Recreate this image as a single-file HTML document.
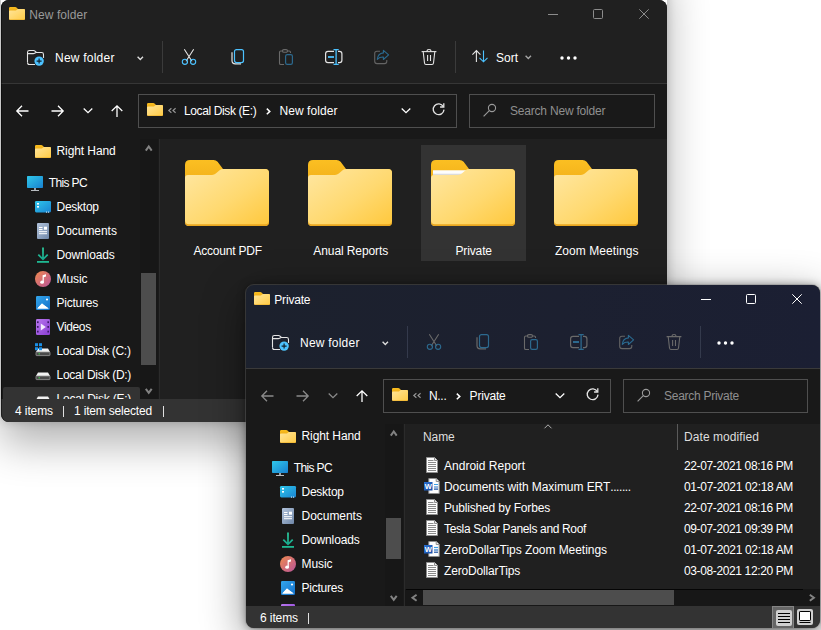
<!DOCTYPE html><html><head><meta charset="utf-8"><title>File Explorer</title><style>
html,body{margin:0;padding:0}
body{width:821px;height:630px;overflow:hidden;background:#fff;position:relative;font-family:"Liberation Sans",sans-serif;font-size:12px;color:#fff}
.win{position:absolute;box-sizing:border-box;border-radius:8px;overflow:hidden;background:#191919}
.frame{position:absolute;box-sizing:border-box;border-radius:8px;border:1px solid #484848;pointer-events:none}
.b{position:absolute;box-sizing:border-box}
.t{position:absolute;white-space:pre;line-height:16px;height:16px}
svg{display:block;overflow:visible}
</style></head><body><div class="b" style="left:1px;top:-40px;width:666px;height:462px;border-radius:8px;box-shadow:0 22px 42px rgba(0,0,0,.3), 0 0 10px rgba(0,0,0,.18)"></div><div class="win" style="left:1px;top:0px;width:666px;height:422px;box-shadow:none"><div class="b" style="left:0;top:-1px;width:666px;height:423px"><div class="b" style="left:0px;top:0px;width:666px;height:84px;background:#202020;"></div><div class="b" style="left:0px;top:84px;width:666px;height:1px;background:#363636;"></div><div class="b" style="left:8px;top:8px"><svg width="16" height="13" viewBox="0 0 16 13"><defs><linearGradient id="g1" x1="0" y1="0" x2="1" y2="1"><stop offset="0" stop-color="#ffe59a"/><stop offset="1" stop-color="#ffcb45"/></linearGradient><linearGradient id="g2" x1="0" y1="0" x2="0" y2="1"><stop offset="0" stop-color="#f9bd1e"/><stop offset="1" stop-color="#eaa716"/></linearGradient></defs><path d="M0 1.2Q0 0 1.2 0H6.3Q7 0 7.5 .5L9 2H14.8Q16 2 16 3.2V6H0Z" fill="url(#g2)"/><path d="M0 4.6Q0 3.6 1 3.6H6.2Q6.8 3.6 7.3 3.2L8.3 2.3Q8.8 2 9.4 2H14.8Q16 2 16 3.2V11.8Q16 13 14.8 13H1.2Q0 13 0 11.8Z" fill="url(#g1)"/><path d="M0 11.6V11.8Q0 13 1.2 13H14.8Q16 13 16 11.8V11.6Q16 12.5 14.8 12.5H1.2Q0 12.5 0 11.6Z" fill="#e9a920"/></svg></div><span class="t " style="left:28.30px;top:7.84px;font-size:12px;letter-spacing:0.064px;color:#9a9a9a;">New folder</span><div class="b" style="left:547px;top:15px;width:10px;height:1px;background:#8c8c8c;"></div><div class="b" style="left:592px;top:10px;width:10px;height:10px;border:1px solid #8c8c8c;border-radius:1.5px"></div><div class="b" style="left:638px;top:10px"><svg width="10" height="10" viewBox="0 0 10 10"><path d="M.3 .3L9.7 9.7M9.7 .3L.3 9.7" stroke="#8c8c8c" stroke-width="1" fill="none"/></svg></div><div class="b" style="left:26px;top:51px"><svg width="18" height="17" viewBox="0 0 18 17"><path d="M.5 12.5V2.4Q.5 .5 2.4 .5H6.6Q7.4 .5 8 1.1L9.4 2.5H14.6Q16.5 2.5 16.5 4.4V8" stroke="#e4e4e4" stroke-width="1.1" fill="none"/><path d="M.5 12.5Q.5 14.5 2.4 14.5H8" stroke="#e4e4e4" stroke-width="1.1" fill="none"/><path d="M.5 3.6H6.3Q7 3.6 7.6 3.2L9 2.5" stroke="#e4e4e4" stroke-width="1.1" fill="none"/><circle cx="12.1" cy="11.1" r="5.1" fill="#202020"/><circle cx="12.1" cy="11.1" r="4.7" fill="#4cc2ff"/><path d="M12.1 8.6V13.6M9.6 11.1H14.6" stroke="#10202c" stroke-width="1.2" fill="none"/></svg></div><span class="t " style="left:54.00px;top:50.84px;font-size:12px;letter-spacing:0.224px;">New folder</span><div class="b" style="left:135.7px;top:56.8px"><svg width="6.6" height="4.4" viewBox="0 0 6.6 4.4"><path d="M.6 .7L3.3 3.4L6 .7" stroke="#dcdcdc" stroke-width="1.4" fill="none"/></svg></div><div class="b" style="left:161px;top:42px;width:1px;height:32px;background:#3b3b3b;"></div><div class="b" style="left:180px;top:50px"><svg width="16" height="16" viewBox="0 0 16 16"><path d="M3.3 .3L11 12.2M12.7 .3L5 12.2" stroke="#e4e4e4" stroke-width="1.1" fill="none"/><circle cx="3.9" cy="12.8" r="2.6" stroke="#4cc2ff" stroke-width="1.1" fill="none"/><circle cx="12.1" cy="12.8" r="2.6" stroke="#4cc2ff" stroke-width="1.1" fill="none"/></svg></div><div class="b" style="left:229.5px;top:50px"><svg width="14" height="16" viewBox="0 0 14 16"><path d="M1 3.3V11.5Q1 14.8 4.3 14.8H10" stroke="#e4e4e4" stroke-width="1.2" fill="none"/><rect x="3.5" y=".6" width="9" height="13" rx="2" stroke="#4cc2ff" stroke-width="1.2" fill="none"/></svg></div><div class="b" style="left:276.5px;top:50px"><svg width="16" height="17" viewBox="0 0 16 17"><path d="M6 15.5H2.8Q1.5 15.5 1.5 14.2V3.3Q1.5 2 2.8 2H4.5M9.5 2H11.2Q12.5 2 12.5 3.3V4" stroke="#6a6a6a" stroke-width="1.1" fill="none"/><rect x="4.5" y=".6" width="5" height="2.6" rx="1.3" stroke="#6a6a6a" stroke-width="1.1" fill="none"/><rect x="7.6" y="5.6" width="6.8" height="9.8" rx="1.6" stroke="#2c698e" stroke-width="1.2" fill="none"/></svg></div><div class="b" style="left:324px;top:50px"><svg width="18" height="16" viewBox="0 0 18 16"><path d="M9 2.3H3Q.6 2.3 .6 4.7V11.3Q.6 13.7 3 13.7H9M13 2.3H14.5Q16.9 2.3 16.9 4.7V11.3Q16.9 13.7 14.5 13.7H13" stroke="#e4e4e4" stroke-width="1.2" fill="none"/><path d="M11.1 .6V15.4M8.5 .6H13.7M8.5 15.4H13.7" stroke="#4cc2ff" stroke-width="1.3" fill="none"/><path d="M3 8H9" stroke="#4cc2ff" stroke-width="1.8" fill="none"/></svg></div><div class="b" style="left:373px;top:50px"><svg width="16" height="16" viewBox="0 0 16 16"><path d="M6 2.2H3Q.7 2.2 .7 4.5V12.3Q.7 14.6 3 14.6H10.5Q12.8 14.6 12.8 12.3V11" stroke="#646464" stroke-width="1.1" fill="none"/><path d="M9.4 1.3L14.6 5.9L9.4 10.5V8Q5.6 7.8 3.3 10.3Q3.8 4.6 9.4 3.9Z" stroke="#2a6a90" stroke-width="1.1" fill="none" stroke-linejoin="round"/></svg></div><div class="b" style="left:420px;top:50px"><svg width="16" height="16" viewBox="0 0 16 16"><path d="M.6 2.6H15.4" stroke="#e4e4e4" stroke-width="1.1" fill="none"/><path d="M6 2.4Q6 .5 8 .5Q10 .5 10 2.4" stroke="#e4e4e4" stroke-width="1.1" fill="none"/><path d="M2.2 2.8L3.5 14Q3.7 15.5 5 15.5H11Q12.3 15.5 12.5 14L13.8 2.8" stroke="#e4e4e4" stroke-width="1.1" fill="none"/><path d="M6.6 6V12M9.5 6V12" stroke="#e4e4e4" stroke-width="1.1" fill="none"/></svg></div><div class="b" style="left:454px;top:42px;width:1px;height:32px;background:#3b3b3b;"></div><div class="b" style="left:471px;top:51px"><svg width="16" height="13" viewBox="0 0 16 13"><path d="M4.4 .6V12M.4 4.6L4.4 .6L8.4 4.6" stroke="#e4e4e4" stroke-width="1.1" fill="none"/><path d="M11.5 .4V11.8M7.5 7.8L11.5 11.8L15.5 7.8" stroke="#4cc2ff" stroke-width="1.1" fill="none"/></svg></div><span class="t " style="left:495.00px;top:50.84px;font-size:12px;letter-spacing:-0.004px;">Sort</span><div class="b" style="left:523.7px;top:55.8px"><svg width="6.6" height="4.4" viewBox="0 0 6.6 4.4"><path d="M.6 .7L3.3 3.4L6 .7" stroke="#a4a4a4" stroke-width="1.4" fill="none"/></svg></div><div class="b" style="left:559px;top:57px"><svg width="17" height="4" viewBox="0 0 17 4"><circle cx="2" cy="2" r="1.7" fill="#fff"/><circle cx="8.5" cy="2" r="1.7" fill="#fff"/><circle cx="15" cy="2" r="1.7" fill="#fff"/></svg></div><div class="b" style="left:15px;top:106px"><svg width="13" height="12" viewBox="0 0 13 12"><path d="M12.5 6H1M6 .7L.8 6L6 11.3" stroke="#ffffff" stroke-width="1.3" fill="none"/></svg></div><div class="b" style="left:50px;top:106px"><svg width="13" height="12" viewBox="0 0 13 12"><path d="M.5 6H12M7 .7L12.2 6L7 11.3" stroke="#ffffff" stroke-width="1.3" fill="none"/></svg></div><div class="b" style="left:82px;top:109.3px"><svg width="10" height="6" viewBox="0 0 10 6"><path d="M.7 .5L5 4.6L9.3 .5" stroke="#ffffff" stroke-width="1.3" fill="none"/></svg></div><div class="b" style="left:110px;top:106px"><svg width="12" height="12" viewBox="0 0 12 12"><path d="M6 12V1M.7 6L6 .8L11.3 6" stroke="#ffffff" stroke-width="1.3" fill="none"/></svg></div><div class="b" style="left:137px;top:95px;width:319px;height:34px;border:1px solid #4f4f4f"></div><div class="b" style="left:146px;top:104px"><svg width="16" height="13" viewBox="0 0 16 13"><defs><linearGradient id="g3" x1="0" y1="0" x2="1" y2="1"><stop offset="0" stop-color="#ffe59a"/><stop offset="1" stop-color="#ffcb45"/></linearGradient><linearGradient id="g4" x1="0" y1="0" x2="0" y2="1"><stop offset="0" stop-color="#f9bd1e"/><stop offset="1" stop-color="#eaa716"/></linearGradient></defs><path d="M0 1.2Q0 0 1.2 0H6.3Q7 0 7.5 .5L9 2H14.8Q16 2 16 3.2V6H0Z" fill="url(#g4)"/><path d="M0 4.6Q0 3.6 1 3.6H6.2Q6.8 3.6 7.3 3.2L8.3 2.3Q8.8 2 9.4 2H14.8Q16 2 16 3.2V11.8Q16 13 14.8 13H1.2Q0 13 0 11.8Z" fill="url(#g3)"/><path d="M0 11.6V11.8Q0 13 1.2 13H14.8Q16 13 16 11.8V11.6Q16 12.5 14.8 12.5H1.2Q0 12.5 0 11.6Z" fill="#e9a920"/></svg></div><div class="b" style="left:167px;top:108.8px"><svg width="9" height="5" viewBox="0 0 9 5"><path d="M3.4 .3L.8 2.5L3.4 4.7M7.6 .3L5 2.5L7.6 4.7" stroke="#969696" stroke-width="1.15" fill="none"/></svg></div><span class="t " style="left:183.00px;top:103.84px;font-size:12px;letter-spacing:-0.382px;">Local Disk (E:)</span><div class="b" style="left:265.3px;top:109px"><svg width="4.6" height="6.8" viewBox="0 0 4.6 6.8"><path d="M.8 .6L3.8 3.4L.8 6.2" stroke="#ffffff" stroke-width="1.5" fill="none"/></svg></div><span class="t " style="left:278.50px;top:103.84px;font-size:12px;letter-spacing:0.064px;">New folder</span><div class="b" style="left:400px;top:109.3px"><svg width="10" height="6" viewBox="0 0 10 6"><path d="M.7 .5L5 4.6L9.3 .5" stroke="#ffffff" stroke-width="1.3" fill="none"/></svg></div><div class="b" style="left:431px;top:104px"><svg width="13" height="13" viewBox="0 0 13 13"><path d="M11.3 3.6A5.4 5.4 0 1 0 12 6.6" stroke="#e4e4e4" stroke-width="1.3" fill="none"/><path d="M11.8 .3V4H8.1" stroke="#e4e4e4" stroke-width="1.3" fill="none"/></svg></div><div class="b" style="left:468px;top:95px;width:186px;height:34px;border:1px solid #4f4f4f"></div><div class="b" style="left:482px;top:104px"><svg width="14" height="14" viewBox="0 0 14 14"><circle cx="9" cy="5" r="3.6" stroke="#9a9a9a" stroke-width="1.1" fill="none"/><path d="M6.3 7.7L.6 13.4" stroke="#9a9a9a" stroke-width="1.1" fill="none"/></svg></div><span class="t " style="left:509.00px;top:103.84px;font-size:12px;letter-spacing:-0.201px;color:#8f8f8f;">Search New folder</span><div class="b" style="left:0px;top:140px;width:666px;height:260px;background:#191919;"></div><div class="b" style="left:139px;top:140px;width:18px;height:260px;background:#171717;"></div><div class="b" style="left:157px;top:140px;width:1px;height:260px;background:#1a1a1a;"></div><div class="b" style="left:158px;top:140px;width:1px;height:260px;background:#2b2b2b;"></div><div class="b" style="left:159px;top:140px;width:507px;height:260px;background:#202020;"></div><div class="b" style="left:0px;top:140px;width:140px;height:260px;overflow:hidden"><div class="b" style="left:34px;top:5.5px"><svg width="16" height="13" viewBox="0 0 16 13"><defs><linearGradient id="g5" x1="0" y1="0" x2="1" y2="1"><stop offset="0" stop-color="#ffe59a"/><stop offset="1" stop-color="#ffcb45"/></linearGradient><linearGradient id="g6" x1="0" y1="0" x2="0" y2="1"><stop offset="0" stop-color="#f9bd1e"/><stop offset="1" stop-color="#eaa716"/></linearGradient></defs><path d="M0 1.2Q0 0 1.2 0H6.3Q7 0 7.5 .5L9 2H14.8Q16 2 16 3.2V6H0Z" fill="url(#g6)"/><path d="M0 4.6Q0 3.6 1 3.6H6.2Q6.8 3.6 7.3 3.2L8.3 2.3Q8.8 2 9.4 2H14.8Q16 2 16 3.2V11.8Q16 13 14.8 13H1.2Q0 13 0 11.8Z" fill="url(#g5)"/><path d="M0 11.6V11.8Q0 13 1.2 13H14.8Q16 13 16 11.8V11.6Q16 12.5 14.8 12.5H1.2Q0 12.5 0 11.6Z" fill="#e9a920"/></svg></div><span class="t " style="left:55.50px;top:3.84px;font-size:12px;letter-spacing:-0.085px;">Right Hand</span><div class="b" style="left:26px;top:36px"><svg width="16" height="16" viewBox="0 0 16 16"><defs><linearGradient id="g7" x1="0" y1="0" x2="1" y2="1"><stop offset="0" stop-color="#30c8ea"/><stop offset="1" stop-color="#1880cf"/></linearGradient></defs><rect x="0" y="1" width="16" height="12" rx=".8" fill="url(#g7)"/><rect x="7" y="13" width="2" height="2" fill="#9aa0a6"/><rect x="4" y="15" width="8" height="1" fill="#b8bcc0"/></svg></div><span class="t " style="left:47.70px;top:35.84px;font-size:12px;letter-spacing:-0.627px;">This PC</span><div class="b" style="left:34px;top:60px"><svg width="16" height="16" viewBox="0 0 16 16"><defs><linearGradient id="g8" x1="0" y1="0" x2="1" y2="1"><stop offset="0" stop-color="#2fc6ea"/><stop offset="1" stop-color="#1a84d2"/></linearGradient></defs><rect x="0" y="2" width="16" height="11.4" rx="1.3" fill="url(#g8)"/><rect x="2" y="4" width="2" height="1.6" fill="#fff"/><rect x="2" y="7" width="2" height="1.6" fill="#fff"/><rect x="11" y="12.6" width="1" height="1" fill="#e8f4ff"/><rect x="13" y="12.6" width="1" height="1" fill="#e8f4ff"/></svg></div><span class="t " style="left:55.50px;top:59.84px;font-size:12px;letter-spacing:-0.247px;">Desktop</span><div class="b" style="left:34px;top:84px"><svg width="16" height="16" viewBox="0 0 16 16"><defs><linearGradient id="g9" x1="0" y1="0" x2="1" y2="1"><stop offset="0" stop-color="#b3c4dc"/><stop offset="1" stop-color="#6f87a8"/></linearGradient></defs><rect x="2" y="0" width="12" height="16" rx="1" fill="url(#g9)"/><path d="M4 4.5H7.5M4 6.5H7.5M4 8.7H12M4 10.7H12" stroke="#fff" stroke-width="1"/><rect x="9" y="3.7" width="3" height="3" fill="#fff"/></svg></div><span class="t " style="left:55.50px;top:83.84px;font-size:12px;letter-spacing:-0.034px;">Documents</span><div class="b" style="left:34px;top:108px"><svg width="16" height="16" viewBox="0 0 16 16"><defs><linearGradient id="g10" x1="0" y1="0" x2="0" y2="1"><stop offset="0" stop-color="#2ccfa0"/><stop offset="1" stop-color="#17a88c"/></linearGradient></defs><path d="M8 .5V12M3.3 7.6L8 12.3L12.7 7.6" stroke="url(#g10)" stroke-width="1.7" fill="none"/><rect x="2" y="14" width="12" height="1.8" fill="#1fb892"/></svg></div><span class="t " style="left:55.50px;top:107.84px;font-size:12px;letter-spacing:-0.142px;">Downloads</span><div class="b" style="left:34px;top:132px"><svg width="16" height="16" viewBox="0 0 16 16"><defs><linearGradient id="g11" x1="0" y1="0" x2="1" y2="1"><stop offset="0" stop-color="#f08a4e"/><stop offset="1" stop-color="#b8549a"/></linearGradient></defs><circle cx="8" cy="8" r="8" fill="url(#g11)"/><path d="M7.6 11V4.2L11 3.2V5.6L8.8 6.2V11" fill="#fff"/><ellipse cx="7.1" cy="11.2" rx="1.9" ry="1.6" fill="#fff"/></svg></div><span class="t " style="left:55.50px;top:131.84px;font-size:12px;letter-spacing:-0.069px;">Music</span><div class="b" style="left:34px;top:156px"><svg width="16" height="16" viewBox="0 0 16 16"><defs><linearGradient id="g12" x1="0" y1="0" x2="1" y2="1"><stop offset="0" stop-color="#33a6ec"/><stop offset="1" stop-color="#1470c8"/></linearGradient></defs><rect x="1" y="1" width="14" height="14" rx="1.2" fill="url(#g12)"/><path d="M2.3 13.6L7 8.4L9.2 10.4L13.7 13.6Z" fill="#fff"/><path d="M7 8.4L2.3 13.6H13.7Z" fill="#fff"/><circle cx="12" cy="4.5" r="1.1" fill="#fff"/></svg></div><span class="t " style="left:55.50px;top:155.84px;font-size:12px;letter-spacing:-0.245px;">Pictures</span><div class="b" style="left:34px;top:180px"><svg width="16" height="16" viewBox="0 0 16 16"><defs><linearGradient id="g13" x1="0" y1="0" x2="1" y2="1"><stop offset="0" stop-color="#b877ee"/><stop offset="1" stop-color="#8a3ed2"/></linearGradient></defs><rect x="1" y="0" width="14" height="16" rx="1.2" fill="url(#g13)"/><g fill="#3a1a66"><rect x="2" y="2.3" width="1.6" height="1.8"/><rect x="2" y="7" width="1.6" height="1.8"/><rect x="2" y="11.7" width="1.6" height="1.8"/><rect x="12.4" y="2.3" width="1.6" height="1.8"/><rect x="12.4" y="7" width="1.6" height="1.8"/><rect x="12.4" y="11.7" width="1.6" height="1.8"/></g><path d="M5.8 4.6L10.8 8L5.8 11.4Z" fill="#f3eafd"/></svg></div><span class="t " style="left:55.50px;top:179.84px;font-size:12px;letter-spacing:-0.364px;">Videos</span><div class="b" style="left:34px;top:201px"><svg width="16" height="16" viewBox="0 0 16 16"><path d="M3 8.5H13L15 12H1Z" fill="#f2f2f2"/><rect x="1" y="12" width="14" height="3.6" rx=".6" fill="#4a4a4a" stroke="#9a9a9a" stroke-width=".8"/><rect x="3.6" y="13.2" width="1.2" height="1.2" fill="#3ee04a"/><g fill="#1b8fe6"><rect x="0" y="3.2" width="3" height="3"/><rect x="4" y="3.2" width="3" height="3"/><rect x="0" y="7.2" width="3" height="3"/><rect x="4" y="7.2" width="3" height="3"/></g></svg></div><span class="t " style="left:55.50px;top:203.84px;font-size:12px;letter-spacing:-0.306px;">Local Disk (C:)</span><div class="b" style="left:34px;top:225px"><svg width="16" height="16" viewBox="0 0 16 16"><path d="M3 8.5H13L15 12H1Z" fill="#f2f2f2"/><rect x="1" y="12" width="14" height="3.6" rx=".6" fill="#4a4a4a" stroke="#9a9a9a" stroke-width=".8"/><rect x="3.6" y="13.2" width="1.2" height="1.2" fill="#3ee04a"/></svg></div><span class="t " style="left:55.50px;top:227.84px;font-size:12px;letter-spacing:-0.273px;">Local Disk (D:)</span><div class="b" style="left:2px;top:248px;width:137px;height:24px;background:#333333;border-radius:2px"></div><div class="b" style="left:34px;top:249px"><svg width="16" height="16" viewBox="0 0 16 16"><path d="M3 8.5H13L15 12H1Z" fill="#f2f2f2"/><rect x="1" y="12" width="14" height="3.6" rx=".6" fill="#4a4a4a" stroke="#9a9a9a" stroke-width=".8"/><rect x="3.6" y="13.2" width="1.2" height="1.2" fill="#3ee04a"/></svg></div><span class="t " style="left:55.50px;top:251.84px;font-size:12px;letter-spacing:-0.229px;">Local Disk (E:)</span></div><div class="b" style="left:143.8px;top:145.8px"><svg width="7.5" height="6.4" viewBox="0 0 7.5 6.4"><path d="M.8 5.6L3.75 1.5L6.7 5.6" stroke="#828282" stroke-width="2.0" fill="none"/></svg></div><div class="b" style="left:143.8px;top:388.8px"><svg width="7.5" height="6.4" viewBox="0 0 7.5 6.4"><path d="M.8 .8L3.75 4.9L6.7 .8" stroke="#828282" stroke-width="2.0" fill="none"/></svg></div><div class="b" style="left:140px;top:274px;width:15px;height:92px;background:#4d4d4d;"></div><div class="b" style="left:184px;top:161px"><svg width="84" height="66" viewBox="0 0 84 66"><defs><linearGradient id="g14" x1="0" y1="0" x2="1" y2="1"><stop offset="0" stop-color="#ffe7a2"/><stop offset=".55" stop-color="#ffd970"/><stop offset="1" stop-color="#ffc83c"/></linearGradient><linearGradient id="g15" x1="0" y1="0" x2="0" y2="1"><stop offset="0" stop-color="#fbbf22"/><stop offset="1" stop-color="#efab17"/></linearGradient></defs><path d="M0 5Q0 0 5 0H28.5Q31 0 32.6 1.8L38 9H80Q84 9 84 13V30H0Z" fill="url(#g15)"/><path d="M0 18Q0 15 3 15H27Q29.2 15 30.8 13.6L34.6 10.3Q36 9 38.2 9H80Q84 9 84 13V62Q84 66 80 66H4Q0 66 0 62Z" fill="url(#g14)"/><path d="M0 60.5V62Q0 66 4 66H80Q84 66 84 62V60.5Q84 64.3 80 64.3H4Q0 64.3 0 60.5Z" fill="#eaa71f"/></svg></div><span class="t " style="left:192.45px;top:243.84px;font-size:12px;letter-spacing:-0.200px;">Account PDF</span><div class="b" style="left:307px;top:161px"><svg width="84" height="66" viewBox="0 0 84 66"><defs><linearGradient id="g16" x1="0" y1="0" x2="1" y2="1"><stop offset="0" stop-color="#ffe7a2"/><stop offset=".55" stop-color="#ffd970"/><stop offset="1" stop-color="#ffc83c"/></linearGradient><linearGradient id="g17" x1="0" y1="0" x2="0" y2="1"><stop offset="0" stop-color="#fbbf22"/><stop offset="1" stop-color="#efab17"/></linearGradient></defs><path d="M0 5Q0 0 5 0H28.5Q31 0 32.6 1.8L38 9H80Q84 9 84 13V30H0Z" fill="url(#g17)"/><path d="M0 18Q0 15 3 15H27Q29.2 15 30.8 13.6L34.6 10.3Q36 9 38.2 9H80Q84 9 84 13V62Q84 66 80 66H4Q0 66 0 62Z" fill="url(#g16)"/><path d="M0 60.5V62Q0 66 4 66H80Q84 66 84 62V60.5Q84 64.3 80 64.3H4Q0 64.3 0 60.5Z" fill="#eaa71f"/></svg></div><span class="t " style="left:312.35px;top:243.84px;font-size:12px;letter-spacing:-0.104px;">Anual Reports</span><div class="b" style="left:420px;top:146px;width:105px;height:116px;background:#333333;"></div><div class="b" style="left:430px;top:161px"><svg width="84" height="66" viewBox="0 0 84 66"><defs><linearGradient id="g18" x1="0" y1="0" x2="1" y2="1"><stop offset="0" stop-color="#ffe7a2"/><stop offset=".55" stop-color="#ffd970"/><stop offset="1" stop-color="#ffc83c"/></linearGradient><linearGradient id="g19" x1="0" y1="0" x2="0" y2="1"><stop offset="0" stop-color="#fbbf22"/><stop offset="1" stop-color="#efab17"/></linearGradient></defs><path d="M0 5Q0 0 5 0H28.5Q31 0 32.6 1.8L38 9H80Q84 9 84 13V30H0Z" fill="url(#g19)"/><path d="M2 10.3H35.5L31 15.5H2Z" fill="#fdfdfd"/><path d="M2 13.8H32.5L31 15.5H2Z" fill="#dcdcdc"/><path d="M0 18Q0 15 3 15H27Q29.2 15 30.8 13.6L34.6 10.3Q36 9 38.2 9H80Q84 9 84 13V62Q84 66 80 66H4Q0 66 0 62Z" fill="url(#g18)"/><path d="M0 60.5V62Q0 66 4 66H80Q84 66 84 62V60.5Q84 64.3 80 64.3H4Q0 64.3 0 60.5Z" fill="#eaa71f"/></svg></div><span class="t " style="left:454.50px;top:243.84px;font-size:12px;letter-spacing:-0.137px;">Private</span><div class="b" style="left:553px;top:161px"><svg width="84" height="66" viewBox="0 0 84 66"><defs><linearGradient id="g20" x1="0" y1="0" x2="1" y2="1"><stop offset="0" stop-color="#ffe7a2"/><stop offset=".55" stop-color="#ffd970"/><stop offset="1" stop-color="#ffc83c"/></linearGradient><linearGradient id="g21" x1="0" y1="0" x2="0" y2="1"><stop offset="0" stop-color="#fbbf22"/><stop offset="1" stop-color="#efab17"/></linearGradient></defs><path d="M0 5Q0 0 5 0H28.5Q31 0 32.6 1.8L38 9H80Q84 9 84 13V30H0Z" fill="url(#g21)"/><path d="M0 18Q0 15 3 15H27Q29.2 15 30.8 13.6L34.6 10.3Q36 9 38.2 9H80Q84 9 84 13V62Q84 66 80 66H4Q0 66 0 62Z" fill="url(#g20)"/><path d="M0 60.5V62Q0 66 4 66H80Q84 66 84 62V60.5Q84 64.3 80 64.3H4Q0 64.3 0 60.5Z" fill="#eaa71f"/></svg></div><span class="t " style="left:553.90px;top:243.84px;font-size:12px;letter-spacing:0.069px;">Zoom Meetings</span><div class="b" style="left:0px;top:400px;width:666px;height:23px;background:#333333;"></div><span class="t " style="left:14.00px;top:403.84px;font-size:12px;letter-spacing:-0.098px;">4 items</span><div class="b" style="left:62px;top:407px;width:1px;height:11px;background:#e0e0e0;"></div><span class="t " style="left:73.00px;top:403.84px;font-size:12px;letter-spacing:-0.181px;">1 item selected</span><div class="b" style="left:162px;top:407px;width:1px;height:11px;background:#e0e0e0;"></div></div></div><div class="frame" style="left:1px;top:0px;width:666px;height:422px;border:0;border-left:1px solid rgba(0,0,0,.45)"></div><div class="win" style="left:246px;top:285px;width:574px;height:343px;box-shadow:0 12px 44px rgba(0,0,0,.45), 0 0 8px rgba(0,0,0,.4)"><div class="b" style="left:0;top:-1px;width:574px;height:344px"><div class="b" style="left:0px;top:0px;width:574px;height:84px;background:linear-gradient(90deg,#1c212d 0%,#1c2030 55%,#1b1f33 100%);"></div><div class="b" style="left:0px;top:84px;width:574px;height:1px;background:#3a3a3a;"></div><div class="b" style="left:8px;top:8px"><svg width="16" height="13" viewBox="0 0 16 13"><defs><linearGradient id="g22" x1="0" y1="0" x2="1" y2="1"><stop offset="0" stop-color="#ffe59a"/><stop offset="1" stop-color="#ffcb45"/></linearGradient><linearGradient id="g23" x1="0" y1="0" x2="0" y2="1"><stop offset="0" stop-color="#f9bd1e"/><stop offset="1" stop-color="#eaa716"/></linearGradient></defs><path d="M0 1.2Q0 0 1.2 0H6.3Q7 0 7.5 .5L9 2H14.8Q16 2 16 3.2V6H0Z" fill="url(#g23)"/><path d="M0 4.6Q0 3.6 1 3.6H6.2Q6.8 3.6 7.3 3.2L8.3 2.3Q8.8 2 9.4 2H14.8Q16 2 16 3.2V11.8Q16 13 14.8 13H1.2Q0 13 0 11.8Z" fill="url(#g22)"/><path d="M0 11.6V11.8Q0 13 1.2 13H14.8Q16 13 16 11.8V11.6Q16 12.5 14.8 12.5H1.2Q0 12.5 0 11.6Z" fill="#e9a920"/></svg></div><span class="t " style="left:28.30px;top:7.84px;font-size:12px;letter-spacing:-0.194px;color:#ffffff;">Private</span><div class="b" style="left:455px;top:15px;width:10px;height:1px;background:#ffffff;"></div><div class="b" style="left:500px;top:10px;width:10px;height:10px;border:1px solid #ffffff;border-radius:1.5px"></div><div class="b" style="left:546px;top:10px"><svg width="10" height="10" viewBox="0 0 10 10"><path d="M.3 .3L9.7 9.7M9.7 .3L.3 9.7" stroke="#ffffff" stroke-width="1" fill="none"/></svg></div><div class="b" style="left:26px;top:51px"><svg width="18" height="17" viewBox="0 0 18 17"><path d="M.5 12.5V2.4Q.5 .5 2.4 .5H6.6Q7.4 .5 8 1.1L9.4 2.5H14.6Q16.5 2.5 16.5 4.4V8" stroke="#e4e4e4" stroke-width="1.1" fill="none"/><path d="M.5 12.5Q.5 14.5 2.4 14.5H8" stroke="#e4e4e4" stroke-width="1.1" fill="none"/><path d="M.5 3.6H6.3Q7 3.6 7.6 3.2L9 2.5" stroke="#e4e4e4" stroke-width="1.1" fill="none"/><circle cx="12.1" cy="11.1" r="5.1" fill="#202020"/><circle cx="12.1" cy="11.1" r="4.7" fill="#4cc2ff"/><path d="M12.1 8.6V13.6M9.6 11.1H14.6" stroke="#10202c" stroke-width="1.2" fill="none"/></svg></div><span class="t " style="left:54.00px;top:50.84px;font-size:12px;letter-spacing:0.224px;">New folder</span><div class="b" style="left:135.7px;top:56.8px"><svg width="6.6" height="4.4" viewBox="0 0 6.6 4.4"><path d="M.6 .7L3.3 3.4L6 .7" stroke="#dcdcdc" stroke-width="1.4" fill="none"/></svg></div><div class="b" style="left:161px;top:42px;width:1px;height:32px;background:#343a4c;"></div><div class="b" style="left:180px;top:50px"><svg width="16" height="16" viewBox="0 0 16 16"><path d="M3.3 .3L11 12.2M12.7 .3L5 12.2" stroke="#6a6a6a" stroke-width="1.1" fill="none"/><circle cx="3.9" cy="12.8" r="2.6" stroke="#2c698e" stroke-width="1.1" fill="none"/><circle cx="12.1" cy="12.8" r="2.6" stroke="#2c698e" stroke-width="1.1" fill="none"/></svg></div><div class="b" style="left:229.5px;top:50px"><svg width="14" height="16" viewBox="0 0 14 16"><path d="M1 3.3V11.5Q1 14.8 4.3 14.8H10" stroke="#6a6a6a" stroke-width="1.2" fill="none"/><rect x="3.5" y=".6" width="9" height="13" rx="2" stroke="#2c698e" stroke-width="1.2" fill="none"/></svg></div><div class="b" style="left:276.5px;top:50px"><svg width="16" height="17" viewBox="0 0 16 17"><path d="M6 15.5H2.8Q1.5 15.5 1.5 14.2V3.3Q1.5 2 2.8 2H4.5M9.5 2H11.2Q12.5 2 12.5 3.3V4" stroke="#6a6a6a" stroke-width="1.1" fill="none"/><rect x="4.5" y=".6" width="5" height="2.6" rx="1.3" stroke="#6a6a6a" stroke-width="1.1" fill="none"/><rect x="7.6" y="5.6" width="6.8" height="9.8" rx="1.6" stroke="#2c698e" stroke-width="1.2" fill="none"/></svg></div><div class="b" style="left:324px;top:50px"><svg width="18" height="16" viewBox="0 0 18 16"><path d="M9 2.3H3Q.6 2.3 .6 4.7V11.3Q.6 13.7 3 13.7H9M13 2.3H14.5Q16.9 2.3 16.9 4.7V11.3Q16.9 13.7 14.5 13.7H13" stroke="#6a6a6a" stroke-width="1.2" fill="none"/><path d="M11.1 .6V15.4M8.5 .6H13.7M8.5 15.4H13.7" stroke="#2c698e" stroke-width="1.3" fill="none"/><path d="M3 8H9" stroke="#2c698e" stroke-width="1.8" fill="none"/></svg></div><div class="b" style="left:373px;top:50px"><svg width="16" height="16" viewBox="0 0 16 16"><path d="M6 2.2H3Q.7 2.2 .7 4.5V12.3Q.7 14.6 3 14.6H10.5Q12.8 14.6 12.8 12.3V11" stroke="#646464" stroke-width="1.1" fill="none"/><path d="M9.4 1.3L14.6 5.9L9.4 10.5V8Q5.6 7.8 3.3 10.3Q3.8 4.6 9.4 3.9Z" stroke="#2a6a90" stroke-width="1.1" fill="none" stroke-linejoin="round"/></svg></div><div class="b" style="left:420px;top:50px"><svg width="16" height="16" viewBox="0 0 16 16"><path d="M.6 2.6H15.4" stroke="#6a6a6a" stroke-width="1.1" fill="none"/><path d="M6 2.4Q6 .5 8 .5Q10 .5 10 2.4" stroke="#6a6a6a" stroke-width="1.1" fill="none"/><path d="M2.2 2.8L3.5 14Q3.7 15.5 5 15.5H11Q12.3 15.5 12.5 14L13.8 2.8" stroke="#6a6a6a" stroke-width="1.1" fill="none"/><path d="M6.6 6V12M9.5 6V12" stroke="#6a6a6a" stroke-width="1.1" fill="none"/></svg></div><div class="b" style="left:454px;top:42px;width:1px;height:32px;background:#343a4c;"></div><div class="b" style="left:471px;top:57px"><svg width="17" height="4" viewBox="0 0 17 4"><circle cx="2" cy="2" r="1.7" fill="#fff"/><circle cx="8.5" cy="2" r="1.7" fill="#fff"/><circle cx="15" cy="2" r="1.7" fill="#fff"/></svg></div><div class="b" style="left:15px;top:106px"><svg width="13" height="12" viewBox="0 0 13 12"><path d="M12.5 6H1M6 .7L.8 6L6 11.3" stroke="#8a8a8a" stroke-width="1.3" fill="none"/></svg></div><div class="b" style="left:50px;top:106px"><svg width="13" height="12" viewBox="0 0 13 12"><path d="M.5 6H12M7 .7L12.2 6L7 11.3" stroke="#8a8a8a" stroke-width="1.3" fill="none"/></svg></div><div class="b" style="left:82px;top:109.3px"><svg width="10" height="6" viewBox="0 0 10 6"><path d="M.7 .5L5 4.6L9.3 .5" stroke="#8a8a8a" stroke-width="1.3" fill="none"/></svg></div><div class="b" style="left:110px;top:106px"><svg width="12" height="12" viewBox="0 0 12 12"><path d="M6 12V1M.7 6L6 .8L11.3 6" stroke="#ffffff" stroke-width="1.3" fill="none"/></svg></div><div class="b" style="left:137px;top:95px;width:228px;height:34px;border:1px solid #4f4f4f"></div><div class="b" style="left:146px;top:104px"><svg width="16" height="13" viewBox="0 0 16 13"><defs><linearGradient id="g24" x1="0" y1="0" x2="1" y2="1"><stop offset="0" stop-color="#ffe59a"/><stop offset="1" stop-color="#ffcb45"/></linearGradient><linearGradient id="g25" x1="0" y1="0" x2="0" y2="1"><stop offset="0" stop-color="#f9bd1e"/><stop offset="1" stop-color="#eaa716"/></linearGradient></defs><path d="M0 1.2Q0 0 1.2 0H6.3Q7 0 7.5 .5L9 2H14.8Q16 2 16 3.2V6H0Z" fill="url(#g25)"/><path d="M0 4.6Q0 3.6 1 3.6H6.2Q6.8 3.6 7.3 3.2L8.3 2.3Q8.8 2 9.4 2H14.8Q16 2 16 3.2V11.8Q16 13 14.8 13H1.2Q0 13 0 11.8Z" fill="url(#g24)"/><path d="M0 11.6V11.8Q0 13 1.2 13H14.8Q16 13 16 11.8V11.6Q16 12.5 14.8 12.5H1.2Q0 12.5 0 11.6Z" fill="#e9a920"/></svg></div><div class="b" style="left:167px;top:108.8px"><svg width="9" height="5" viewBox="0 0 9 5"><path d="M3.4 .3L.8 2.5L3.4 4.7M7.6 .3L5 2.5L7.6 4.7" stroke="#969696" stroke-width="1.15" fill="none"/></svg></div><span class="t " style="left:183.00px;top:103.84px;font-size:12px;letter-spacing:-0.318px;">N...</span><div class="b" style="left:210.4px;top:109px"><svg width="4.6" height="6.8" viewBox="0 0 4.6 6.8"><path d="M.8 .6L3.8 3.4L.8 6.2" stroke="#ffffff" stroke-width="1.5" fill="none"/></svg></div><span class="t " style="left:223.60px;top:103.84px;font-size:12px;letter-spacing:-0.194px;">Private</span><div class="b" style="left:309px;top:109.3px"><svg width="10" height="6" viewBox="0 0 10 6"><path d="M.7 .5L5 4.6L9.3 .5" stroke="#ffffff" stroke-width="1.3" fill="none"/></svg></div><div class="b" style="left:340px;top:104px"><svg width="13" height="13" viewBox="0 0 13 13"><path d="M11.3 3.6A5.4 5.4 0 1 0 12 6.6" stroke="#e4e4e4" stroke-width="1.3" fill="none"/><path d="M11.8 .3V4H8.1" stroke="#e4e4e4" stroke-width="1.3" fill="none"/></svg></div><div class="b" style="left:377px;top:95px;width:185px;height:34px;border:1px solid #4f4f4f"></div><div class="b" style="left:391px;top:104px"><svg width="14" height="14" viewBox="0 0 14 14"><circle cx="9" cy="5" r="3.6" stroke="#9a9a9a" stroke-width="1.1" fill="none"/><path d="M6.3 7.7L.6 13.4" stroke="#9a9a9a" stroke-width="1.1" fill="none"/></svg></div><span class="t " style="left:418.00px;top:103.84px;font-size:12px;letter-spacing:-0.265px;color:#8f8f8f;">Search Private</span><div class="b" style="left:0px;top:140px;width:574px;height:182px;background:#191919;"></div><div class="b" style="left:139px;top:140px;width:18px;height:182px;background:#171717;"></div><div class="b" style="left:157px;top:140px;width:1px;height:182px;background:#1a1a1a;"></div><div class="b" style="left:158px;top:140px;width:1px;height:182px;background:#2b2b2b;"></div><div class="b" style="left:159px;top:140px;width:415px;height:182px;background:#202020;"></div><div class="b" style="left:0px;top:140px;width:140px;height:182px;overflow:hidden"><div class="b" style="left:34px;top:5.5px"><svg width="16" height="13" viewBox="0 0 16 13"><defs><linearGradient id="g26" x1="0" y1="0" x2="1" y2="1"><stop offset="0" stop-color="#ffe59a"/><stop offset="1" stop-color="#ffcb45"/></linearGradient><linearGradient id="g27" x1="0" y1="0" x2="0" y2="1"><stop offset="0" stop-color="#f9bd1e"/><stop offset="1" stop-color="#eaa716"/></linearGradient></defs><path d="M0 1.2Q0 0 1.2 0H6.3Q7 0 7.5 .5L9 2H14.8Q16 2 16 3.2V6H0Z" fill="url(#g27)"/><path d="M0 4.6Q0 3.6 1 3.6H6.2Q6.8 3.6 7.3 3.2L8.3 2.3Q8.8 2 9.4 2H14.8Q16 2 16 3.2V11.8Q16 13 14.8 13H1.2Q0 13 0 11.8Z" fill="url(#g26)"/><path d="M0 11.6V11.8Q0 13 1.2 13H14.8Q16 13 16 11.8V11.6Q16 12.5 14.8 12.5H1.2Q0 12.5 0 11.6Z" fill="#e9a920"/></svg></div><span class="t " style="left:55.50px;top:3.84px;font-size:12px;letter-spacing:-0.085px;">Right Hand</span><div class="b" style="left:26px;top:36px"><svg width="16" height="16" viewBox="0 0 16 16"><defs><linearGradient id="g28" x1="0" y1="0" x2="1" y2="1"><stop offset="0" stop-color="#30c8ea"/><stop offset="1" stop-color="#1880cf"/></linearGradient></defs><rect x="0" y="1" width="16" height="12" rx=".8" fill="url(#g28)"/><rect x="7" y="13" width="2" height="2" fill="#9aa0a6"/><rect x="4" y="15" width="8" height="1" fill="#b8bcc0"/></svg></div><span class="t " style="left:47.70px;top:35.84px;font-size:12px;letter-spacing:-0.627px;">This PC</span><div class="b" style="left:34px;top:60px"><svg width="16" height="16" viewBox="0 0 16 16"><defs><linearGradient id="g29" x1="0" y1="0" x2="1" y2="1"><stop offset="0" stop-color="#2fc6ea"/><stop offset="1" stop-color="#1a84d2"/></linearGradient></defs><rect x="0" y="2" width="16" height="11.4" rx="1.3" fill="url(#g29)"/><rect x="2" y="4" width="2" height="1.6" fill="#fff"/><rect x="2" y="7" width="2" height="1.6" fill="#fff"/><rect x="11" y="12.6" width="1" height="1" fill="#e8f4ff"/><rect x="13" y="12.6" width="1" height="1" fill="#e8f4ff"/></svg></div><span class="t " style="left:55.50px;top:59.84px;font-size:12px;letter-spacing:-0.247px;">Desktop</span><div class="b" style="left:34px;top:84px"><svg width="16" height="16" viewBox="0 0 16 16"><defs><linearGradient id="g30" x1="0" y1="0" x2="1" y2="1"><stop offset="0" stop-color="#b3c4dc"/><stop offset="1" stop-color="#6f87a8"/></linearGradient></defs><rect x="2" y="0" width="12" height="16" rx="1" fill="url(#g30)"/><path d="M4 4.5H7.5M4 6.5H7.5M4 8.7H12M4 10.7H12" stroke="#fff" stroke-width="1"/><rect x="9" y="3.7" width="3" height="3" fill="#fff"/></svg></div><span class="t " style="left:55.50px;top:83.84px;font-size:12px;letter-spacing:-0.034px;">Documents</span><div class="b" style="left:34px;top:108px"><svg width="16" height="16" viewBox="0 0 16 16"><defs><linearGradient id="g31" x1="0" y1="0" x2="0" y2="1"><stop offset="0" stop-color="#2ccfa0"/><stop offset="1" stop-color="#17a88c"/></linearGradient></defs><path d="M8 .5V12M3.3 7.6L8 12.3L12.7 7.6" stroke="url(#g31)" stroke-width="1.7" fill="none"/><rect x="2" y="14" width="12" height="1.8" fill="#1fb892"/></svg></div><span class="t " style="left:55.50px;top:107.84px;font-size:12px;letter-spacing:-0.142px;">Downloads</span><div class="b" style="left:34px;top:132px"><svg width="16" height="16" viewBox="0 0 16 16"><defs><linearGradient id="g32" x1="0" y1="0" x2="1" y2="1"><stop offset="0" stop-color="#f08a4e"/><stop offset="1" stop-color="#b8549a"/></linearGradient></defs><circle cx="8" cy="8" r="8" fill="url(#g32)"/><path d="M7.6 11V4.2L11 3.2V5.6L8.8 6.2V11" fill="#fff"/><ellipse cx="7.1" cy="11.2" rx="1.9" ry="1.6" fill="#fff"/></svg></div><span class="t " style="left:55.50px;top:131.84px;font-size:12px;letter-spacing:-0.069px;">Music</span><div class="b" style="left:34px;top:156px"><svg width="16" height="16" viewBox="0 0 16 16"><defs><linearGradient id="g33" x1="0" y1="0" x2="1" y2="1"><stop offset="0" stop-color="#33a6ec"/><stop offset="1" stop-color="#1470c8"/></linearGradient></defs><rect x="1" y="1" width="14" height="14" rx="1.2" fill="url(#g33)"/><path d="M2.3 13.6L7 8.4L9.2 10.4L13.7 13.6Z" fill="#fff"/><path d="M7 8.4L2.3 13.6H13.7Z" fill="#fff"/><circle cx="12" cy="4.5" r="1.1" fill="#fff"/></svg></div><span class="t " style="left:55.50px;top:155.84px;font-size:12px;letter-spacing:-0.245px;">Pictures</span><div class="b" style="left:34px;top:180px"><svg width="16" height="16" viewBox="0 0 16 16"><defs><linearGradient id="g34" x1="0" y1="0" x2="1" y2="1"><stop offset="0" stop-color="#b877ee"/><stop offset="1" stop-color="#8a3ed2"/></linearGradient></defs><rect x="1" y="0" width="14" height="16" rx="1.2" fill="url(#g34)"/><g fill="#3a1a66"><rect x="2" y="2.3" width="1.6" height="1.8"/><rect x="2" y="7" width="1.6" height="1.8"/><rect x="2" y="11.7" width="1.6" height="1.8"/><rect x="12.4" y="2.3" width="1.6" height="1.8"/><rect x="12.4" y="7" width="1.6" height="1.8"/><rect x="12.4" y="11.7" width="1.6" height="1.8"/></g><path d="M5.8 4.6L10.8 8L5.8 11.4Z" fill="#f3eafd"/></svg></div><span class="t " style="left:55.50px;top:179.84px;font-size:12px;letter-spacing:-0.364px;">Videos</span></div><div class="b" style="left:143.8px;top:145.8px"><svg width="7.5" height="6.4" viewBox="0 0 7.5 6.4"><path d="M.8 5.6L3.75 1.5L6.7 5.6" stroke="#828282" stroke-width="2.0" fill="none"/></svg></div><div class="b" style="left:143.8px;top:310.8px"><svg width="7.5" height="6.4" viewBox="0 0 7.5 6.4"><path d="M.8 .8L3.75 4.9L6.7 .8" stroke="#828282" stroke-width="2.0" fill="none"/></svg></div><div class="b" style="left:140px;top:234px;width:15px;height:41px;background:#4d4d4d;"></div><span class="t " style="left:177.00px;top:144.84px;font-size:12px;letter-spacing:-0.104px;color:#dedede;">Name</span><div class="b" style="left:297.5px;top:140.3px"><svg width="8" height="5" viewBox="0 0 8 5"><path d="M.5 4.3L4 .8L7.5 4.3" stroke="#b0b0b0" stroke-width="1" fill="none"/></svg></div><div class="b" style="left:431px;top:140px;width:1px;height:26px;background:#5a5a5a;"></div><span class="t " style="left:438.00px;top:144.84px;font-size:12px;letter-spacing:0.073px;color:#dedede;">Date modified</span><div class="b" style="left:180px;top:173px"><svg width="12" height="16" viewBox="0 0 12 16"><path d="M.5 .5H8.5L11.5 3.5V15.5H.5Z" fill="#fdfdfd" stroke="#8e8e8e" stroke-width="1"/><path d="M8.5 .5V3.5H11.5" fill="#e9e9e9" stroke="#8e8e8e" stroke-width="1"/><path d="M2 3.5H7.5M2 5.5H10M2 7.5H10M2 9.5H10M2 11.5H10M2 13.5H10" stroke="#8a8a8a" stroke-width="1"/></svg></div><span class="t " style="left:198.00px;top:173.84px;font-size:12px;letter-spacing:0.020px;">Android Report</span><span class="t " style="left:438.00px;top:173.84px;font-size:12px;letter-spacing:-0.373px;">22-07-2021 08:16 PM</span><div class="b" style="left:178px;top:194px"><svg width="16" height="16" viewBox="0 0 16 16"><defs><linearGradient id="g35" x1="0" y1="0" x2="1" y2="1"><stop offset="0" stop-color="#2a6fd0"/><stop offset="1" stop-color="#184fa8"/></linearGradient></defs><path d="M4.8 .5H12.2L15.2 3.5V15.5H4.8Z" fill="#fdfdfd" stroke="#8e8e8e" stroke-width="1"/><path d="M12.2 .5V3.5H15.2" fill="#e9e9e9" stroke="#8e8e8e" stroke-width="1"/><path d="M10 6.5H14" stroke="#3d9fe6" stroke-width="1.2"/><path d="M10 9H14" stroke="#2473c8" stroke-width="1.2"/><path d="M10 11.2H14" stroke="#1b4fa0" stroke-width="1.2"/><rect x="0" y="4" width="8.5" height="8.5" fill="url(#g35)"/><text x="4.25" y="11" font-family="Liberation Sans, sans-serif" font-weight="bold" font-size="7.5" fill="#fff" text-anchor="middle">W</text></svg></div><span class="t " style="left:198.00px;top:194.84px;font-size:12px;letter-spacing:-0.059px;">Documents with Maximum ERT</span><span class="t " style="left:364.30px;top:194.84px;font-size:12px;letter-spacing:-0.421px;">.......</span><span class="t " style="left:438.00px;top:194.84px;font-size:12px;letter-spacing:-0.338px;">01-07-2021 02:18 AM</span><div class="b" style="left:180px;top:215px"><svg width="12" height="16" viewBox="0 0 12 16"><path d="M.5 .5H8.5L11.5 3.5V15.5H.5Z" fill="#fdfdfd" stroke="#8e8e8e" stroke-width="1"/><path d="M8.5 .5V3.5H11.5" fill="#e9e9e9" stroke="#8e8e8e" stroke-width="1"/><path d="M2 3.5H7.5M2 5.5H10M2 7.5H10M2 9.5H10M2 11.5H10M2 13.5H10" stroke="#8a8a8a" stroke-width="1"/></svg></div><span class="t " style="left:198.00px;top:215.84px;font-size:12px;letter-spacing:-0.179px;">Published by Forbes</span><span class="t " style="left:438.00px;top:215.84px;font-size:12px;letter-spacing:-0.373px;">22-07-2021 08:16 PM</span><div class="b" style="left:180px;top:236px"><svg width="12" height="16" viewBox="0 0 12 16"><path d="M.5 .5H8.5L11.5 3.5V15.5H.5Z" fill="#fdfdfd" stroke="#8e8e8e" stroke-width="1"/><path d="M8.5 .5V3.5H11.5" fill="#e9e9e9" stroke="#8e8e8e" stroke-width="1"/><path d="M2 3.5H7.5M2 5.5H10M2 7.5H10M2 9.5H10M2 11.5H10M2 13.5H10" stroke="#8a8a8a" stroke-width="1"/></svg></div><span class="t " style="left:198.00px;top:236.84px;font-size:12px;letter-spacing:-0.350px;">Tesla Solar Panels and Roof</span><span class="t " style="left:438.00px;top:236.84px;font-size:12px;letter-spacing:-0.373px;">09-07-2021 09:39 PM</span><div class="b" style="left:178px;top:257px"><svg width="16" height="16" viewBox="0 0 16 16"><defs><linearGradient id="g36" x1="0" y1="0" x2="1" y2="1"><stop offset="0" stop-color="#2a6fd0"/><stop offset="1" stop-color="#184fa8"/></linearGradient></defs><path d="M4.8 .5H12.2L15.2 3.5V15.5H4.8Z" fill="#fdfdfd" stroke="#8e8e8e" stroke-width="1"/><path d="M12.2 .5V3.5H15.2" fill="#e9e9e9" stroke="#8e8e8e" stroke-width="1"/><path d="M10 6.5H14" stroke="#3d9fe6" stroke-width="1.2"/><path d="M10 9H14" stroke="#2473c8" stroke-width="1.2"/><path d="M10 11.2H14" stroke="#1b4fa0" stroke-width="1.2"/><rect x="0" y="4" width="8.5" height="8.5" fill="url(#g36)"/><text x="4.25" y="11" font-family="Liberation Sans, sans-serif" font-weight="bold" font-size="7.5" fill="#fff" text-anchor="middle">W</text></svg></div><span class="t " style="left:198.00px;top:257.84px;font-size:12px;letter-spacing:-0.046px;">ZeroDollarTips Zoom Meetings</span><span class="t " style="left:438.00px;top:257.84px;font-size:12px;letter-spacing:-0.338px;">01-07-2021 02:18 AM</span><div class="b" style="left:180px;top:278px"><svg width="12" height="16" viewBox="0 0 12 16"><path d="M.5 .5H8.5L11.5 3.5V15.5H.5Z" fill="#fdfdfd" stroke="#8e8e8e" stroke-width="1"/><path d="M8.5 .5V3.5H11.5" fill="#e9e9e9" stroke="#8e8e8e" stroke-width="1"/><path d="M2 3.5H7.5M2 5.5H10M2 7.5H10M2 9.5H10M2 11.5H10M2 13.5H10" stroke="#8a8a8a" stroke-width="1"/></svg></div><span class="t " style="left:198.00px;top:278.84px;font-size:12px;letter-spacing:-0.161px;">ZeroDollarTips</span><span class="t " style="left:438.00px;top:278.84px;font-size:12px;letter-spacing:-0.373px;">03-08-2021 12:20 PM</span><div class="b" style="left:159px;top:305px;width:416px;height:17px;background:#171717;"></div><div class="b" style="left:160px;top:305px;width:397px;height:1px;background:#050505;"></div><div class="b" style="left:164.8px;top:309.7px"><svg width="6.4" height="7.5" viewBox="0 0 6.4 7.5"><path d="M5.6 .8L1.5 3.75L5.6 6.7" stroke="#828282" stroke-width="2.0" fill="none"/></svg></div><div class="b" style="left:563px;top:309.7px"><svg width="6.4" height="7.5" viewBox="0 0 6.4 7.5"><path d="M.8 .8L4.9 3.75L.8 6.7" stroke="#828282" stroke-width="2.0" fill="none"/></svg></div><div class="b" style="left:177px;top:306px;width:251px;height:15px;background:#4d4d4d;"></div><div class="b" style="left:0px;top:322px;width:574px;height:22px;background:#333333;"></div><span class="t " style="left:14.00px;top:325.84px;font-size:12px;letter-spacing:-0.098px;">6 items</span><div class="b" style="left:62px;top:329px;width:1px;height:11px;background:#e0e0e0;"></div><div class="b" style="left:526px;top:322px;width:22px;height:23px;background:#666666;border:1px solid #858585"></div><div class="b" style="left:530px;top:326px"><svg width="16" height="16" viewBox="0 0 16 16"><rect x="0" y="0" width="16" height="16" rx="2" fill="#cfcfcf"/><path d="M2 3.5H14M2 6.5H14M2 9.5H14M2 12.5H14" stroke="#000" stroke-width="1"/></svg></div><div class="b" style="left:551px;top:325px"><svg width="16" height="16" viewBox="0 0 16 16"><rect x="0" y="0" width="16" height="16" rx="2" fill="#cfcfcf"/><rect x="2.5" y="2.5" width="11" height="9" rx=".6" fill="#fff" stroke="#000" stroke-width="1"/><path d="M2.5 13.5H13.5" stroke="#000" stroke-width="1"/></svg></div></div></div><div class="frame" style="left:245px;top:284px;width:576px;height:345px;border-radius:9px;border-color:rgba(125,125,125,.32)"></div></body></html>
